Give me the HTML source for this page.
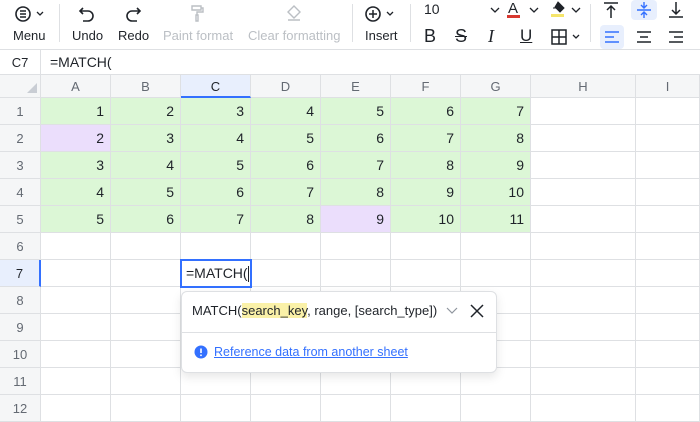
<!DOCTYPE html>
<html><head><style>
*{margin:0;padding:0;box-sizing:border-box}
body{width:700px;height:414px;overflow:hidden;background:#fff;font-family:"Liberation Sans",sans-serif;color:#1f2329;position:relative}
.a{position:absolute}
.tb{font-size:13px;color:#1f2329;text-align:center}
.dis{color:#bbbfc4}
svg{position:absolute}
.cell{position:absolute;height:27px;line-height:27px;text-align:right;padding-right:6px;font-size:14px;border-right:1px solid #dee0e3;border-bottom:1px solid #dee0e3}
.rh{position:absolute;left:0;width:41px;height:27px;line-height:27px;text-align:center;font-size:13px;color:#646a73;background:#f5f6f7;border-right:1px solid #dee0e3;border-bottom:1px solid #dee0e3}
.ch{position:absolute;top:75px;height:23px;line-height:23px;text-align:center;font-size:13px;color:#646a73;background:#f5f6f7;border-right:1px solid #dee0e3;border-bottom:1px solid #dee0e3}
</style></head><body>
<!-- toolbar -->
<div class="a" style="left:0;top:0;width:700px;height:50px;border-bottom:1px solid #dee0e3"></div>
<svg style="left:14px;top:5px" width="34" height="18" viewBox="0 0 34 18"><circle cx="9" cy="9" r="7" fill="none" stroke="#1f2329" stroke-width="1.6"/><path d="M6 6h6M6 9h6M6 12h6" stroke="#1f2329" stroke-width="1.4"/><path d="M23 7l3 3 3-3" fill="none" stroke="#1f2329" stroke-width="1.3"/></svg>
<div class="a tb" style="left:13px;top:28px">Menu</div>
<div class="a" style="left:59px;top:4px;width:1px;height:38px;background:#dee0e3"></div>
<svg style="left:77px;top:4px" width="20" height="20" viewBox="0 0 20 20"><path d="M6 4L3 7l3 3M3 7h8a5 5 0 010 10H6" fill="none" stroke="#1f2329" stroke-width="1.6"/></svg>
<div class="a tb" style="left:72px;top:28px">Undo</div>
<svg style="left:123px;top:4px" width="20" height="20" viewBox="0 0 20 20"><path d="M14 4l3 3-3 3M17 7H9a5 5 0 000 10h5" fill="none" stroke="#1f2329" stroke-width="1.6"/></svg>
<div class="a tb" style="left:118px;top:28px">Redo</div>
<svg style="left:189px;top:4px" width="18" height="18" viewBox="0 0 18 18"><path d="M3 2h9v4H3zM12 4h2v4H8v3M7 11h2v6H7z" fill="none" stroke="#bbbfc4" stroke-width="1.4"/></svg>
<div class="a tb dis" style="left:163px;top:28px">Paint format</div>
<svg style="left:285px;top:4px" width="18" height="18" viewBox="0 0 18 18"><path d="M9 2l6 6-6 6-6-6zM3 16h12" fill="none" stroke="#bbbfc4" stroke-width="1.4"/></svg>
<div class="a tb dis" style="left:248px;top:28px">Clear formatting</div>
<div class="a" style="left:352px;top:4px;width:1px;height:38px;background:#dee0e3"></div>
<svg style="left:364px;top:5px" width="34" height="18" viewBox="0 0 34 18"><circle cx="9" cy="9" r="7" fill="none" stroke="#1f2329" stroke-width="1.6"/><path d="M9 5v8M5 9h8" stroke="#1f2329" stroke-width="1.5"/><path d="M23 7l3 3 3-3" fill="none" stroke="#1f2329" stroke-width="1.3"/></svg>
<div class="a tb" style="left:365px;top:28px">Insert</div>
<div class="a" style="left:410px;top:4px;width:1px;height:38px;background:#dee0e3"></div>
<div class="a" style="left:424px;top:1px;font-size:14px">10</div>
<svg style="left:490px;top:6px" width="10" height="8"><path d="M1 2l4 4 4-4" fill="none" stroke="#1f2329" stroke-width="1.3"/></svg>
<div class="a" style="left:508px;top:0px;font-size:15px">A</div>
<div class="a" style="left:507px;top:15px;width:13px;height:3px;background:#d83931"></div>
<svg style="left:529px;top:6px" width="10" height="8"><path d="M1 2l4 4 4-4" fill="none" stroke="#1f2329" stroke-width="1.3"/></svg>
<svg style="left:551px;top:1px" width="16" height="14"><path d="M7 1l6 6-4 4-5-5zM2 7h10" fill="#1f2329" stroke="#1f2329"/></svg>
<div class="a" style="left:551px;top:14px;width:13px;height:3px;background:#f5e56b"></div>
<svg style="left:571px;top:6px" width="10" height="8"><path d="M1 2l4 4 4-4" fill="none" stroke="#1f2329" stroke-width="1.3"/></svg>
<div class="a" style="left:424px;top:26px;font-size:18px">B</div>
<div class="a" style="left:455px;top:26px;font-size:18px;text-decoration:line-through">S</div>
<div class="a" style="left:488px;top:26px;font-size:18px;font-style:italic;font-family:'Liberation Serif',serif">I</div>
<div class="a" style="left:520px;top:26px;font-size:17px;text-decoration:underline">U</div>
<svg style="left:551px;top:29px" width="32" height="16"><rect x="1" y="1" width="14" height="14" fill="none" stroke="#1f2329" stroke-width="1.5"/><path d="M8 1v14M1 8h14" stroke="#1f2329" stroke-width="1.5"/><path d="M22 6l3 3 3-3" fill="none" stroke="#1f2329" stroke-width="1.3"/></svg>
<div class="a" style="left:590px;top:4px;width:1px;height:38px;background:#dee0e3"></div>
<svg style="left:603px;top:1px" width="16" height="18"><path d="M1 2h14M8 5v12M4 9l4-4 4 4" fill="none" stroke="#1f2329" stroke-width="1.5"/></svg>
<div class="a" style="left:631px;top:0;width:26px;height:20px;background:#e8effd;border-radius:4px"></div>
<svg style="left:636px;top:1px" width="16" height="18"><path d="M1 9h14M8 1v6M5 4l3 3 3-3M8 17v-6M5 14l3-3 3 3" fill="none" stroke="#3370ff" stroke-width="1.4"/></svg>
<svg style="left:668px;top:1px" width="16" height="18"><path d="M1 16h14M8 1v12M4 9l4 4 4-4" fill="none" stroke="#1f2329" stroke-width="1.5"/></svg>
<div class="a" style="left:600px;top:25px;width:24px;height:24px;background:#e8effd;border-radius:4px"></div>
<svg style="left:604px;top:29px" width="16" height="16"><path d="M1 3h14M1 8h9M1 13h14" stroke="#3370ff" stroke-width="1.5"/></svg>
<svg style="left:636px;top:29px" width="16" height="16"><path d="M1 3h14M4 8h8M1 13h14" stroke="#1f2329" stroke-width="1.5"/></svg>
<svg style="left:668px;top:29px" width="16" height="16"><path d="M1 3h14M6 8h9M1 13h14" stroke="#1f2329" stroke-width="1.5"/></svg>
<!-- formula bar -->
<div class="a" style="left:0;top:50px;width:700px;height:25px;border-bottom:1px solid #dee0e3"></div>
<div class="a" style="left:0;top:50px;width:41px;height:25px;border-right:1px solid #dee0e3;font-size:13px;line-height:25px;text-align:center">C7</div>
<div class="a" style="left:50px;top:50px;font-size:14px;line-height:25px">=MATCH(</div>
<!-- headers -->
<div class="a" style="left:0;top:75px;width:41px;height:23px;background:#f5f6f7;border-right:1px solid #dee0e3;border-bottom:1px solid #dee0e3"></div>
<svg style="left:26px;top:82px" width="12" height="12"><path d="M11 1v10H1z" fill="#c9cdd4"/></svg>
<div class="ch" style="left:41px;width:70px">A</div>
<div class="ch" style="left:111px;width:70px">B</div>
<div class="ch" style="left:181px;width:70px;background:#e8effd;border-bottom:2px solid #3370ff;color:#1f2329">C</div>
<div class="ch" style="left:251px;width:70px">D</div>
<div class="ch" style="left:321px;width:70px">E</div>
<div class="ch" style="left:391px;width:70px">F</div>
<div class="ch" style="left:461px;width:70px">G</div>
<div class="ch" style="left:531px;width:105px">H</div>
<div class="ch" style="left:636px;width:64px">I</div>
<div id="g"></div>
<script>
var L=[41,111,181,251,321,391,461,531,636,700],h='';
for(var r=0;r<12;r++){var t=98+r*27;
h+='<div class="rh" style="top:'+t+'px;'+(r==6?'background:#e8effd;border-right:2px solid #3370ff;color:#1f2329':'')+'">'+(r+1)+'</div>';
for(var c=0;c<9;c++){var v='',bg='#fff';if(r<5&&c<7){v=r+c+1;bg='#dcf7d6';if((r==1&&c==0)||(r==4&&c==4))bg='#ebdefc';}
h+='<div class="cell" style="left:'+L[c]+'px;top:'+t+'px;width:'+(L[c+1]-L[c])+'px;background:'+bg+'">'+v+'</div>';}}
document.getElementById('g').innerHTML=h;
</script>
<!-- editing cell -->
<div class="a" style="left:180px;top:259px;width:72px;height:29px;border:2px solid #3370ff;background:#fff;font-size:14px;line-height:25px;padding-left:4px">=MATCH(<span style="display:inline-block;width:1px;height:16px;background:#1f2329;vertical-align:middle"></span></div>
<!-- popup -->
<div class="a" style="left:181px;top:291px;width:316px;height:82px;background:#fff;border:1px solid #dee0e3;border-radius:6px;box-shadow:0 4px 10px rgba(0,0,0,.1)">
<div class="a" style="left:10px;top:11px;font-size:13px;white-space:nowrap">MATCH(<span style="background:#faf1a8">search_key</span>, range, [search_type])</div>
<svg style="left:264px;top:15px" width="12" height="8"><path d="M1 1l5 5 5-5" fill="none" stroke="#8f959e" stroke-width="1.2"/></svg>
<svg style="left:288px;top:12px" width="14" height="14"><path d="M1 1l12 12M13 1L1 13" stroke="#1f2329" stroke-width="1.5"/></svg>
<div class="a" style="left:0;top:40px;width:314px;height:1px;background:#dee0e3"></div>
<svg style="left:12px;top:53px" width="14" height="14"><circle cx="7" cy="7" r="6.5" fill="#3370ff"/><path d="M7 3.5v4.5" stroke="#fff" stroke-width="1.6"/><circle cx="7" cy="10.3" r=".9" fill="#fff"/></svg>
<div class="a" style="left:32px;top:53px;font-size:12.5px;color:#3370ff;text-decoration:underline">Reference data from another sheet</div>
</div>
</body></html>
